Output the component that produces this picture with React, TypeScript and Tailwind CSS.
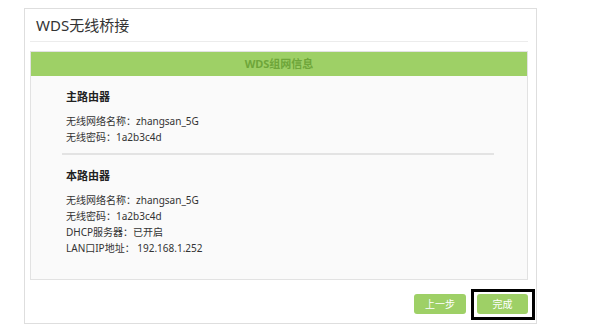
const font = { fontFamily: '"Noto Sans", "Noto Sans CJK SC", sans-serif' };

const mainRouter = [
  { label: '无线网络名称：', value: 'zhangsan_5G' },
  { label: '无线密码：', value: '1a2b3c4d' },
];

const localRouter = [
  { label: '无线网络名称：', value: 'zhangsan_5G' },
  { label: '无线密码：', value: '1a2b3c4d' },
  { label: 'DHCP服务器：', value: '已开启' },
  { label: 'LAN口IP地址：', value: ' 192.168.1.252' },
];

function InfoLines({ rows }: { rows: { label: string; value: string }[] }) {
  return (
    <div className="mt-[8px] flex flex-col">
      {rows.map((row, i) => (
        <p key={i} className="h-[16px] text-[10px] leading-[16px] text-[#333]">
          {row.label}
          {row.value}
        </p>
      ))}
    </div>
  );
}

export default function App() {
  return (
    <div className="h-[326px] w-[600px] bg-white" style={font}>
      <div className="ml-[24px] mt-[8px] flex h-[316px] w-[513px] flex-col border border-[#dedede] bg-white pl-[5px] pr-[8px]">
        <div className="flex h-[33px] items-center border-b border-[#ececec] pl-[6px]">
          <h1 className="text-[15px] leading-none text-[#333]">WDS无线桥接</h1>
        </div>

        <div className="mt-[9px] flex h-[229px] flex-col border border-[#e2e2e2] bg-[#fafafa]">
          <div className="flex h-[24px] items-center justify-center bg-[#9ed066]">
            <span className="text-[11px] font-bold text-[#6ea63a]">WDS组网信息</span>
          </div>

          <div className="pl-[35px] pt-[13px]">
            <h2 className="h-[16px] text-[11px] font-bold leading-[16px] text-[#222]">主路由器</h2>
            <InfoLines rows={mainRouter} />
          </div>

          <div className="ml-[31px] mr-[33px] mt-[8px] h-[2px] bg-[#e3e3e3]" />

          <div className="pl-[35px] pt-[13px]">
            <h2 className="h-[16px] text-[11px] font-bold leading-[16px] text-[#222]">本路由器</h2>
            <InfoLines rows={localRouter} />
          </div>
        </div>

        <div className="mt-[14px] flex items-start justify-end gap-[11px]">
          <button className="h-[20px] w-[52px] rounded-[3px] bg-[#9ed066] text-[10px] text-white">
            上一步
          </button>
          <div className="relative flex">
            <button className="h-[20px] w-[51px] rounded-[3px] bg-[#9ed066] text-[10px] text-white">
              完成
            </button>
            <span className="pointer-events-none absolute -bottom-[6px] -left-[6px] -right-[7px] -top-[5px] border-[3px] border-black" />
          </div>
        </div>
      </div>
    </div>
  );
}
